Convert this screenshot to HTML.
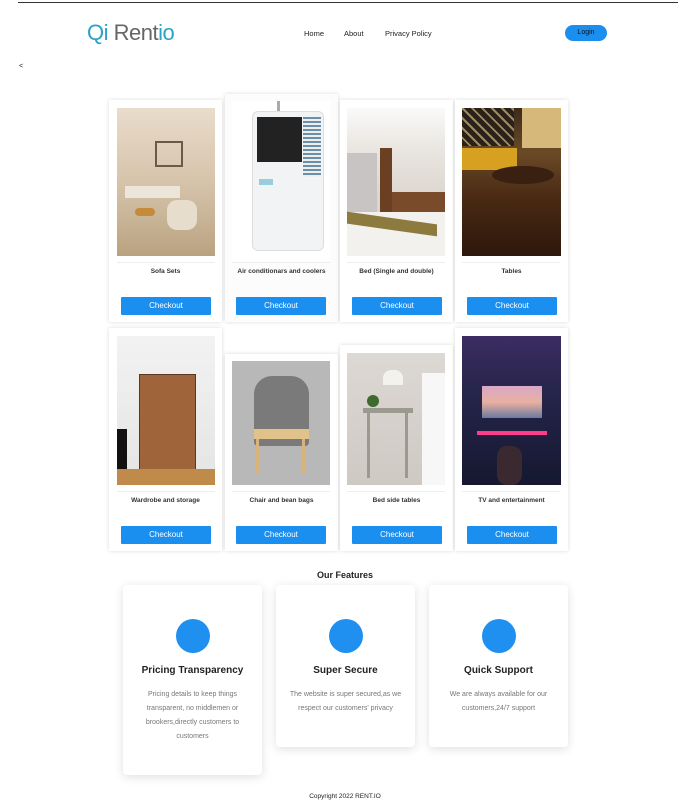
<!DOCTYPE html>
<html><head><meta charset="utf-8"><style>
*{margin:0;padding:0;box-sizing:border-box}
body{width:697px;height:803px;background:#fff;position:relative;overflow:hidden;font-family:"Liberation Sans",sans-serif;color:#222}
.a{position:absolute}
.card{position:absolute;background:#fff;box-shadow:0 0 4px rgba(0,0,0,.14);width:113px}
.img{position:absolute;overflow:hidden}
.t{position:absolute;width:113px;text-align:center;font-size:6.5px;font-weight:bold;color:#333}
.btn{position:absolute;width:90px;height:18px;background:#1a8ff0;color:#fff;font-size:8px;text-align:center;line-height:18px;border-radius:1px}
.sep{position:absolute;height:1px;width:98px;background:#eee}
.f{position:absolute;width:139px;background:#fff;border-radius:4px;box-shadow:0 2px 10px rgba(0,0,0,.13);text-align:center}
.f .c{width:34px;height:34px;border-radius:50%;background:#1f8ff0;margin:34px auto 0}
.f h3{font-size:10px;margin-top:12px;color:#222}
.f p{font-size:7px;color:#777;line-height:14px;margin:12px 18px 0}
</style></head><body>
<div class="a" style="left:18px;top:2px;width:660px;height:1px;background:#333"></div>
<div class="a" style="left:87px;top:20px;font-size:22px;letter-spacing:-0.5px;line-height:26px"><span style="color:#2aa3c6">Qi</span> <span style="color:#666">Rent</span><span style="color:#2aa3c6">io</span></div>
<div class="a" style="left:304px;top:29px;font-size:7.5px;color:#222">Home</div>
<div class="a" style="left:344px;top:29px;font-size:7.5px;color:#222">About</div>
<div class="a" style="left:385px;top:29px;font-size:7.5px;color:#222">Privacy Policy</div>
<div class="a" style="left:565px;top:25px;width:42px;height:16px;border-radius:8px;background:#1a8ff0;color:#111;font-size:7px;text-align:center;line-height:16px">Login</div>
<div class="a" style="left:19px;top:63px;font-size:7px">&lt;</div>

<div class="card" style="left:109px;top:100px;height:222px"></div>
<div class="card" style="left:225px;top:94px;height:228px;background:#fcfcfc"></div>
<div class="card" style="left:340px;top:100px;height:222px"></div>
<div class="card" style="left:455px;top:100px;height:222px"></div>

<div class="img" style="left:117px;top:108px;width:98px;height:148px;background:linear-gradient(180deg,#e9dccb 0%,#d8c6ae 45%,#cbb79b 70%,#b9a27f 100%)">
 <div class="a" style="left:38px;top:33px;width:28px;height:26px;border:2px solid #6a5a4a"></div>
 <div class="a" style="left:8px;top:78px;width:55px;height:12px;background:#ece5da"></div>
 <div class="a" style="left:18px;top:100px;width:20px;height:8px;background:#c58a3a;border-radius:4px"></div>
 <div class="a" style="left:50px;top:92px;width:30px;height:30px;background:#e7ddcd;border-radius:10px"></div>
</div>
<div class="img" style="left:232px;top:101px;width:98px;height:160px;background:#fff">
 <div class="a" style="left:45px;top:0;width:3px;height:12px;background:#aaa"></div>
 <div class="a" style="left:20px;top:10px;width:72px;height:140px;background:#f2f3f5;border-radius:6px;border:1px solid #ddd"></div>
 <div class="a" style="left:25px;top:16px;width:45px;height:45px;background:#222"></div>
 <div class="a" style="left:71px;top:16px;width:18px;height:60px;background:repeating-linear-gradient(180deg,#6a8fa8 0 2px,#eee 2px 4px)"></div>
 <div class="a" style="left:27px;top:78px;width:14px;height:6px;background:#9cd"></div>
</div>
<div class="img" style="left:347px;top:108px;width:98px;height:148px;background:linear-gradient(180deg,#fafafa 0%,#e8e4df 30%,#dcd6cf 60%)">
 <div class="a" style="left:0;top:45px;width:30px;height:60px;background:#c8c4c4"></div>
 <div class="a" style="left:33px;top:40px;width:12px;height:70px;background:#6b3f22"></div>
 <div class="a" style="left:45px;top:84px;width:53px;height:20px;background:#7a4b2b"></div>
 <div class="a" style="left:0;top:104px;width:98px;height:44px;background:#f3f1ee"></div>
 <div class="a" style="left:0;top:110px;width:90px;height:12px;background:#8c7a3e;transform:skewY(8deg)"></div>
</div>
<div class="img" style="left:462px;top:108px;width:99px;height:148px;background:linear-gradient(180deg,#3b2a1c 0%,#6a4a26 30%,#4a2a14 60%,#2d170b 100%)">
 <div class="a" style="left:0;top:0;width:52px;height:38px;background:repeating-linear-gradient(45deg,#2a2118 0 5px,#a08a60 5px 7px)"></div>
 <div class="a" style="left:60px;top:0;width:39px;height:40px;background:#d6b87a"></div>
 <div class="a" style="left:0;top:40px;width:55px;height:22px;background:#d8a020"></div>
 <div class="a" style="left:30px;top:58px;width:62px;height:18px;background:#3a2010;border-radius:50%"></div>
</div>

<div class="sep" style="left:117px;top:262px"></div><div class="sep" style="left:232px;top:262px"></div><div class="sep" style="left:347px;top:262px"></div><div class="sep" style="left:462px;top:262px"></div>
<div class="t" style="left:109px;top:268px">Sofa Sets</div>
<div class="t" style="left:225px;top:268px">Air conditionars and coolers</div>
<div class="t" style="left:340px;top:268px">Bed (Single and double)</div>
<div class="t" style="left:455px;top:268px">Tables</div>
<div class="btn" style="left:121px;top:297px">Checkout</div>
<div class="btn" style="left:236px;top:297px">Checkout</div>
<div class="btn" style="left:352px;top:297px">Checkout</div>
<div class="btn" style="left:467px;top:297px">Checkout</div>

<div class="card" style="left:109px;top:328px;height:223px"></div>
<div class="card" style="left:225px;top:354px;height:197px"></div>
<div class="card" style="left:340px;top:345px;height:206px"></div>
<div class="card" style="left:455px;top:328px;height:223px"></div>

<div class="img" style="left:117px;top:336px;width:98px;height:149px;background:linear-gradient(180deg,#f2f2f2,#e4e4e4)">
 <div class="a" style="left:22px;top:38px;width:57px;height:98px;background:#a0643a;border:1px solid #5a3820"></div>
 <div class="a" style="left:0;top:93px;width:10px;height:40px;background:#111"></div>
 <div class="a" style="left:0;top:133px;width:98px;height:16px;background:#c08a4a"></div>
</div>
<div class="img" style="left:232px;top:361px;width:98px;height:124px;background:#b9b8b8">
 <div class="a" style="left:22px;top:15px;width:55px;height:70px;background:#7a7a7a;border-radius:18px 18px 4px 4px"></div>
 <div class="a" style="left:22px;top:68px;width:55px;height:10px;background:#e0c28a"></div>
 <div class="a" style="left:24px;top:78px;width:3px;height:34px;background:#d9b47a"></div>
 <div class="a" style="left:70px;top:78px;width:3px;height:34px;background:#d9b47a"></div>
</div>
<div class="img" style="left:347px;top:353px;width:98px;height:132px;background:linear-gradient(180deg,#dcd8d4,#cfc9c3)">
 <div class="a" style="left:36px;top:17px;width:20px;height:15px;background:#f4f2ec;border-radius:8px 8px 0 0"></div>
 <div class="a" style="left:16px;top:55px;width:50px;height:5px;background:#9a9a8e"></div>
 <div class="a" style="left:20px;top:60px;width:3px;height:65px;background:#9a9a8e"></div>
 <div class="a" style="left:58px;top:60px;width:3px;height:65px;background:#9a9a8e"></div>
 <div class="a" style="left:75px;top:20px;width:23px;height:112px;background:#f7f7f7"></div>
 <div class="a" style="left:20px;top:42px;width:12px;height:12px;background:#3e6a30;border-radius:50%"></div>
</div>
<div class="img" style="left:462px;top:336px;width:99px;height:149px;background:linear-gradient(180deg,#3c2c62 0%,#25244a 40%,#151830 100%)">
 <div class="a" style="left:20px;top:50px;width:60px;height:32px;background:linear-gradient(180deg,#d8a8c8,#eab0a0 50%,#6a7aa0)"></div>
 <div class="a" style="left:15px;top:95px;width:70px;height:4px;background:#ff3c8c"></div>
 <div class="a" style="left:35px;top:110px;width:25px;height:39px;background:#3a2a30;border-radius:10px"></div>
</div>

<div class="sep" style="left:117px;top:491px"></div><div class="sep" style="left:232px;top:491px"></div><div class="sep" style="left:347px;top:491px"></div><div class="sep" style="left:462px;top:491px"></div>
<div class="t" style="left:109px;top:497px">Wardrobe and storage</div>
<div class="t" style="left:225px;top:497px">Chair and bean bags</div>
<div class="t" style="left:340px;top:497px">Bed side tables</div>
<div class="t" style="left:455px;top:497px">TV and entertainment</div>
<div class="btn" style="left:121px;top:526px">Checkout</div>
<div class="btn" style="left:236px;top:526px">Checkout</div>
<div class="btn" style="left:352px;top:526px">Checkout</div>
<div class="btn" style="left:467px;top:526px">Checkout</div>

<div class="a" style="left:0;width:690px;top:570px;text-align:center;font-size:9px;font-weight:bold;color:#222">Our Features</div>
<div class="f" style="left:123px;top:585px;height:190px"><div class="c"></div><h3>Pricing Transparency</h3><p>Pricing details to keep things transparent, no middlemen or brookers,directly customers to customers</p></div>
<div class="f" style="left:276px;top:585px;height:162px"><div class="c"></div><h3>Super Secure</h3><p style="margin:12px 10px 0">The website is super secured,as we respect our customers' privacy</p></div>
<div class="f" style="left:429px;top:585px;height:162px"><div class="c"></div><h3>Quick Support</h3><p>We are always available for our customers,24/7 support</p></div>

<div class="a" style="left:0;width:690px;top:793px;text-align:center;font-size:6.5px;color:#222">Copyright 2022 RENT.IO</div>
</body></html>
